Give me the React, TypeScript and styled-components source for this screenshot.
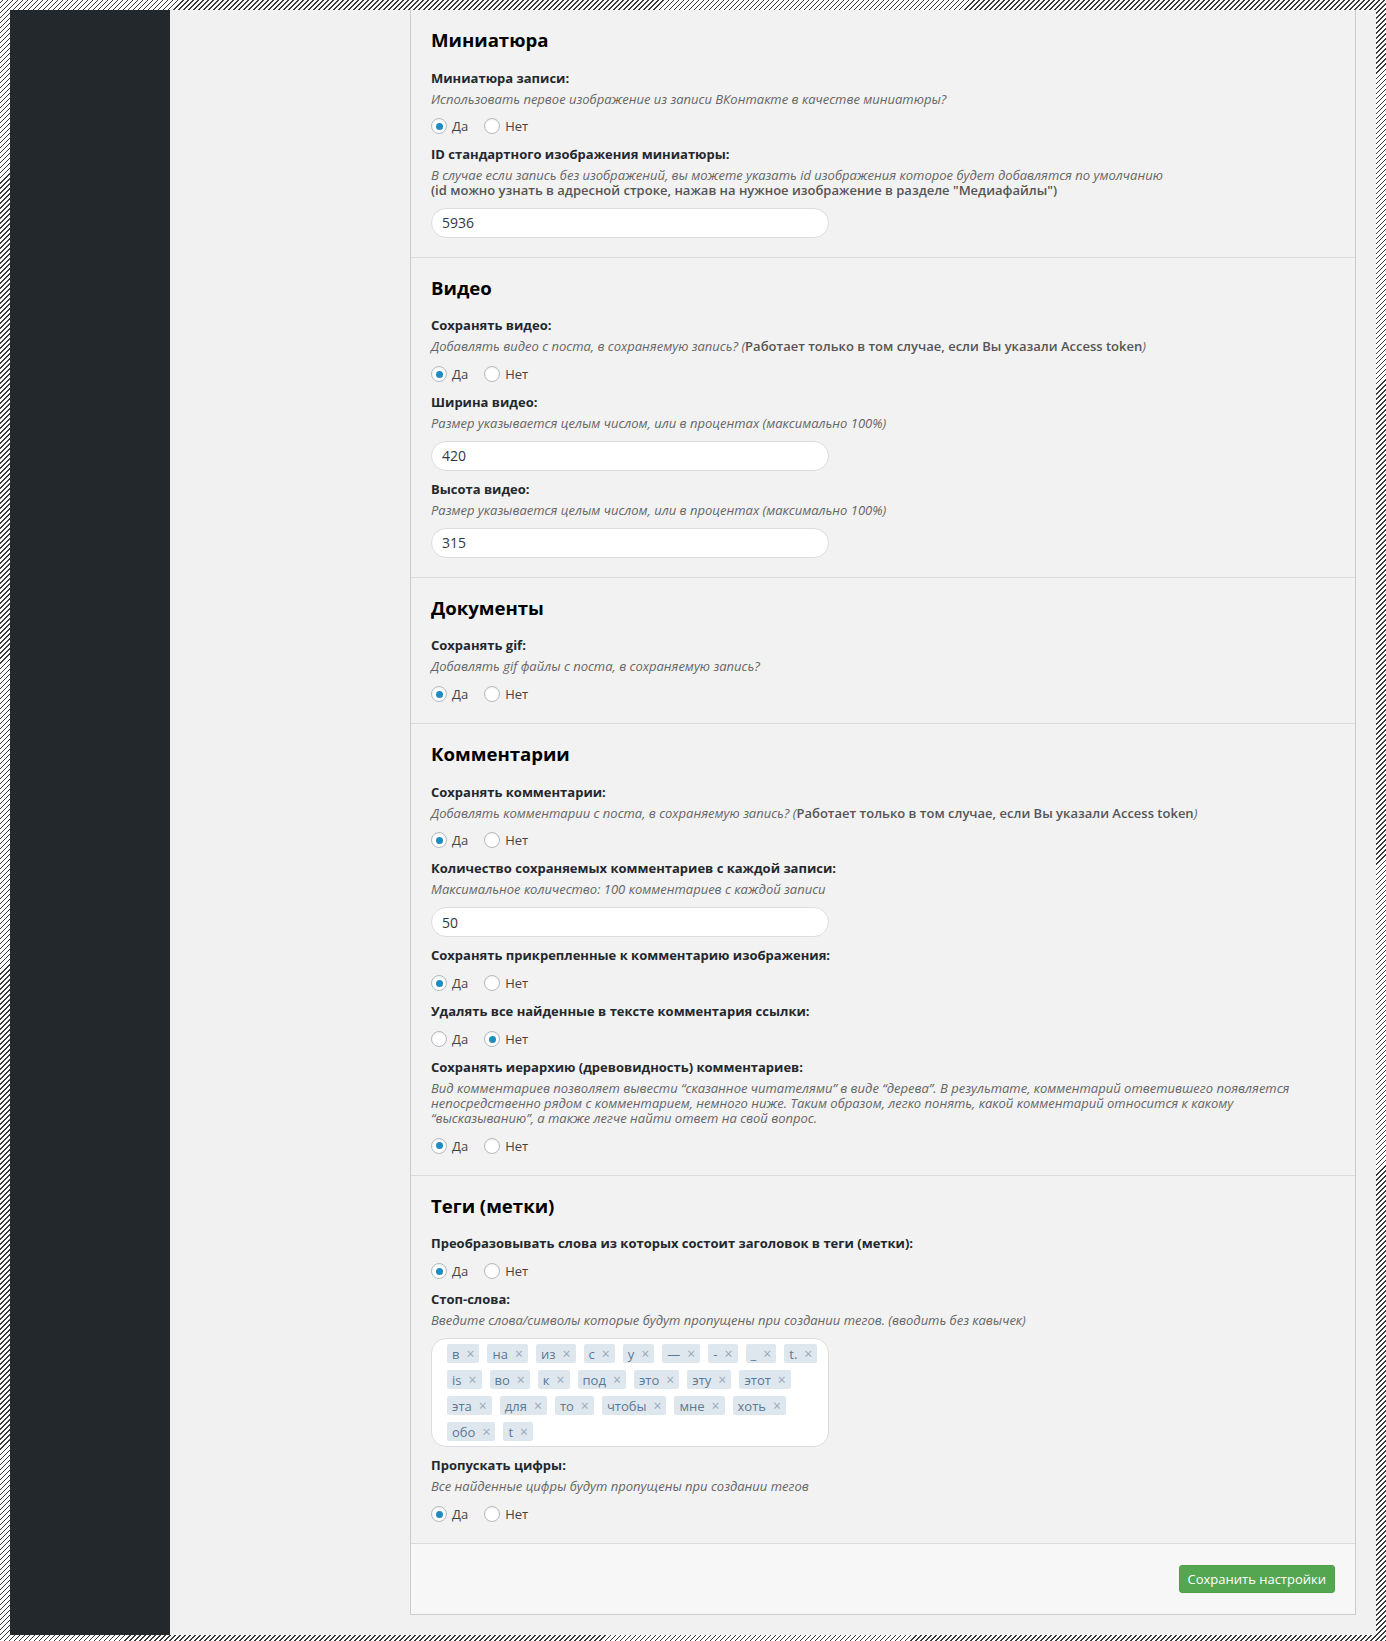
import React from 'react';
import styled, { createGlobalStyle } from 'styled-components';

const GlobalStyle = createGlobalStyle`
  html, body {
    margin: 0;
    padding: 0;
  }
  body {
    font-family: 'Open Sans', 'Liberation Sans', sans-serif;
    background: repeating-linear-gradient(-45deg, #ffffff 0, #ffffff 2.4px, #3a3a3a 2.4px, #3a3a3a 3.54px);
  }
  * {
    box-sizing: border-box;
  }
`;

interface IRadioProps {
  checked?: boolean;
}

interface IOption {
  label: string;
  checked: boolean;
}

const STOP_WORDS = [
  'в', 'на', 'из', 'с', 'у', '—', '-', '_', 't.',
  'is', 'во', 'к', 'под', 'это', 'эту', 'этот',
  'эта', 'для', 'то', 'чтобы', 'мне', 'хоть',
  'обо', 't',
];

const yesNo = (yes: boolean): IOption[] => [
  { label: 'Да', checked: yes },
  { label: 'Нет', checked: !yes },
];

const RadioRow = ({ options }: { options: IOption[] }) => (
  <Controls>
    <RadioGroup>
      {options.map(o => (
        <RadioOption key={o.label}>
          <Radio checked={o.checked} />
          {o.label}
        </RadioOption>
      ))}
    </RadioGroup>
  </Controls>
);

const App = () => {
  return (
    <>
      <GlobalStyle />
      <Frame>
        <Sidebar />
        <Main>
          <Panel>
            <Section>
              <Heading>Миниатюра</Heading>
              <Field>
                <Label>Миниатюра записи:</Label>
                <Desc>Использовать первое изображение из записи ВКонтакте в качестве миниатюры?</Desc>
                <RadioRow options={yesNo(true)} />
              </Field>
              <Field>
                <Label>ID стандартного изображения миниатюры:</Label>
                <Desc>
                  В случае если запись без изображений, вы можете указать id изображения которое будет добавлятся по умолчанию
                  <br />
                  <Strong>(id можно узнать в адресной строке, нажав на нужное изображение в разделе "Медиафайлы")</Strong>
                </Desc>
                <Controls>
                  <TextInput type="text" defaultValue="5936" />
                </Controls>
              </Field>
            </Section>

            <Section>
              <Heading>Видео</Heading>
              <Field>
                <Label>Сохранять видео:</Label>
                <Desc>
                  Добавлять видео с поста, в сохраняемую запись? (
                  <Strong>Работает только в том случае, если Вы указали Access token</Strong>)
                </Desc>
                <RadioRow options={yesNo(true)} />
              </Field>
              <Field>
                <Label>Ширина видео:</Label>
                <Desc>Размер указывается целым числом, или в процентах (максимально 100%)</Desc>
                <Controls>
                  <TextInput type="text" defaultValue="420" />
                </Controls>
              </Field>
              <Field>
                <Label>Высота видео:</Label>
                <Desc>Размер указывается целым числом, или в процентах (максимально 100%)</Desc>
                <Controls>
                  <TextInput type="text" defaultValue="315" />
                </Controls>
              </Field>
            </Section>

            <Section>
              <Heading>Документы</Heading>
              <Field>
                <Label>Сохранять gif:</Label>
                <Desc>Добавлять gif файлы с поста, в сохраняемую запись?</Desc>
                <RadioRow options={yesNo(true)} />
              </Field>
            </Section>

            <Section>
              <Heading>Комментарии</Heading>
              <Field>
                <Label>Сохранять комментарии:</Label>
                <Desc>
                  Добавлять комментарии с поста, в сохраняемую запись? (
                  <Strong>Работает только в том случае, если Вы указали Access token</Strong>)
                </Desc>
                <RadioRow options={yesNo(true)} />
              </Field>
              <Field>
                <Label>Количество сохраняемых комментариев с каждой записи:</Label>
                <Desc>Максимальное количество: 100 комментариев с каждой записи</Desc>
                <Controls>
                  <TextInput type="text" defaultValue="50" />
                </Controls>
              </Field>
              <Field>
                <Label>Сохранять прикрепленные к комментарию изображения:</Label>
                <RadioRow options={yesNo(true)} />
              </Field>
              <Field>
                <Label>Удалять все найденные в тексте комментария ссылки:</Label>
                <RadioRow options={yesNo(false)} />
              </Field>
              <Field>
                <Label>Сохранять иерархию (древовидность) комментариев:</Label>
                <Desc>
                  Вид комментариев позволяет вывести “сказанное читателями” в виде “дерева”. В результате, комментарий
                  ответившего появляется непосредственно рядом с комментарием, немного ниже. Таким образом, легко понять,
                  какой комментарий относится к какому “высказыванию”, а также легче найти ответ на свой вопрос.
                </Desc>
                <RadioRow options={yesNo(true)} />
              </Field>
            </Section>

            <Section>
              <Heading>Теги (метки)</Heading>
              <Field>
                <Label>Преобразовывать слова из которых состоит заголовок в теги (метки):</Label>
                <RadioRow options={yesNo(true)} />
              </Field>
              <Field>
                <Label>Стоп-слова:</Label>
                <Desc>Введите слова/символы которые будут пропущены при создании тегов. (вводить без кавычек)</Desc>
                <Controls>
                  <TagBox>
                    {STOP_WORDS.map((w, i) => (
                      <Tag key={i}>
                        {w}
                        <TagRemove>×</TagRemove>
                      </Tag>
                    ))}
                  </TagBox>
                </Controls>
              </Field>
              <Field>
                <Label>Пропускать цифры:</Label>
                <Desc>Все найденные цифры будут пропущены при создании тегов</Desc>
                <RadioRow options={yesNo(true)} />
              </Field>
            </Section>

            <Footer>
              <SaveButton type="button">Сохранить настройки</SaveButton>
            </Footer>
          </Panel>
        </Main>
      </Frame>
    </>
  );
};

const Frame = styled.div`
  display: flex;
  margin: 10px;
  min-height: 1621px;
`;

const Sidebar = styled.div`
  width: 160px;
  flex-shrink: 0;
  background: #23282d;
`;

const Main = styled.div`
  flex: 1;
  background: #f1f1f1;
  padding: 0 20px 20px 240px;
`;

const Panel = styled.div`
  background: #f2f2f2;
  border: 1px solid #cccccc;
  border-top: none;
`;

const Section = styled.div`
  display: flex;
  flex-direction: column;
  gap: 8px;
  padding: 18px 20px 19px;
  border-bottom: 1px solid #dcdcdc;
`;

const Heading = styled.h2`
  margin: 0 0 7.5px;
  font-size: 18.6px;
  line-height: 24px;
  font-weight: 700;
  color: #000;
`;

const Field = styled.div`
  display: flex;
  flex-direction: column;
`;

const Label = styled.div`
  font-size: 13px;
  line-height: 20px;
  font-weight: 700;
  color: #23282d;
  margin-bottom: 4px;
`;

const Desc = styled.p`
  margin: 0 0 6px;
  font-size: 13px;
  line-height: 14.8px;
  font-style: italic;
  color: #666;
`;

const Strong = styled.span`
  font-style: normal;
  font-weight: 600;
  color: #555;
`;

const Controls = styled.div`
  margin-top: 4px;
`;

const RadioGroup = styled.div`
  display: flex;
  align-items: center;
  gap: 16px;
  height: 20px;
`;

const RadioOption = styled.label`
  display: inline-flex;
  align-items: center;
  gap: 5px;
  font-size: 13px;
  color: #444;
`;

const Radio = styled.span<IRadioProps>`
  position: relative;
  width: 16px;
  height: 16px;
  border-radius: 50%;
  border: 1px solid #b4b9be;
  background: #fff;
  box-shadow: inset 0 1px 2px rgba(0, 0, 0, 0.07);
  &::before {
    content: '';
    display: ${props => (props.checked ? 'block' : 'none')};
    position: absolute;
    left: 3.5px;
    top: 3.5px;
    width: 7px;
    height: 7px;
    border-radius: 50%;
    background: #1e8cbe;
  }
`;

const TextInput = styled.input`
  display: block;
  width: 398px;
  height: 30px;
  padding: 0 10px;
  border: 1px solid #dddddd;
  border-radius: 15px;
  background: #fff;
  font-family: 'Open Sans', 'Liberation Sans', sans-serif;
  font-size: 14px;
  color: #32373c;
  outline: none;
`;

const TagBox = styled.div`
  display: flex;
  flex-wrap: wrap;
  gap: 6.5px 8px;
  width: 398px;
  padding: 5px 8px 5px 15px;
  border: 1px solid #dddddd;
  border-radius: 15px;
  background: #fff;
`;

const Tag = styled.span`
  display: inline-flex;
  align-items: center;
  gap: 7px;
  height: 19.5px;
  padding: 0 5px;
  background: #dfe7ee;
  border-radius: 2px;
  font-size: 13px;
  color: #5b7894;
`;

const TagRemove = styled.span`
  font-size: 14px;
  line-height: 1;
  color: #98a9ba;
`;

const Footer = styled.div`
  display: flex;
  justify-content: flex-end;
  align-items: center;
  height: 70px;
  padding: 0 20px;
  background: #f7f7f7;
`;

const SaveButton = styled.button`
  height: 28px;
  padding: 0 8px;
  border: 1px solid #4e9e4a;
  border-radius: 3px;
  background: #55a651;
  font-family: 'Open Sans', 'Liberation Sans', sans-serif;
  font-size: 13px;
  color: #fff;
  cursor: pointer;
`;

export default App;
